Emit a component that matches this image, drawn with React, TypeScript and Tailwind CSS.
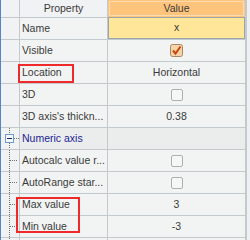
import React from "react";

type Row = {
  label: string;
  kind: "text" | "check" | "checked" | "empty" | "selected";
  value?: string;
  child?: boolean;
  group?: boolean;
};

const rows: Row[] = [
  { label: "Name", kind: "selected", value: "x" },
  { label: "Visible", kind: "checked" },
  { label: "Location", kind: "text", value: "Horizontal" },
  { label: "3D", kind: "check" },
  { label: "3D axis's thickn...", kind: "text", value: "0.38" },
  { label: "Numeric axis", kind: "empty", group: true },
  { label: "Autocalc value r...", kind: "check", child: true },
  { label: "AutoRange star...", kind: "check", child: true },
  { label: "Max value", kind: "text", value: "3", child: true },
  { label: "Min value", kind: "text", value: "-3", child: true },
  { label: "", kind: "empty", child: true },
];

const Box = () => (
  <span className="block w-[12px] h-[12px] rounded-[2px] border border-[#a9b1b5] bg-[#f5f7f7]" />
);

const Checked = () => (
  <svg width="13" height="13" viewBox="0 0 13 13">
    <rect x="0.5" y="0.5" width="12" height="12" rx="2" fill="#f6d3a8" stroke="#a88660" />
    <path d="M3 6.5 L5.5 9.5 L10.5 2.5" fill="none" stroke="#c8460e" strokeWidth="2" />
  </svg>
);

const Tree = ({ group }: { group?: boolean }) => (
  <svg width="18" height="21" viewBox="0 0 18 21" className="block">
    {group ? (
      <>
        <line x1="8.5" y1="0" x2="8.5" y2="6" stroke="#707070" strokeDasharray="1 1" />
        <rect x="4.5" y="6.5" width="8" height="8" fill="#f4f8fc" stroke="#6f9cc8" />
        <line x1="6" y1="10.5" x2="11" y2="10.5" stroke="#202060" />
        <line x1="13" y1="10.5" x2="18" y2="10.5" stroke="#707070" strokeDasharray="1 1" />
        <line x1="8.5" y1="15" x2="8.5" y2="21" stroke="#707070" strokeDasharray="1 1" />
      </>
    ) : (
      <>
        <line x1="8.5" y1="0" x2="8.5" y2="21" stroke="#707070" strokeDasharray="1 1" />
        <line x1="9" y1="10.5" x2="17" y2="10.5" stroke="#707070" strokeDasharray="1 1" />
      </>
    )}
  </svg>
);

export default function App() {
  return (
    <div
      className="relative w-[250px] h-[240px] overflow-hidden bg-[#eef1f3] flex text-[10.5px] text-[#3a3a3a]"
      style={{ fontFamily: '"Liberation Sans", Arial, sans-serif' }}
    >
      <div className="w-[1px] bg-[#5585c4] shrink-0" />
      <div className="flex flex-col">
        {/* header */}
        <div className="flex h-[18px] border-b border-[#c3cace] shrink-0">
          <div className="w-[19px] border-r border-[#c3cace] bg-[#f0f2f4]" />
          <div className="w-[88px] border-r border-[#c3cace] bg-[#f0f2f4] flex items-center justify-center">
            Property
          </div>
          <div className="w-[139px] border-r-2 border-[#c3cace] bg-[#ffc47c] p-[1px]">
            <div className="h-full border border-[#ffdcb0] flex items-center justify-center">Value</div>
          </div>
        </div>
        {rows.map((r, i) => (
          <div
            key={i}
            className={`flex h-[22px] shrink-0 border-b border-[#c3cace] ${r.group ? "bg-[#ebeded]" : "bg-[#f2f4f4]"}`}
          >
            <div className="w-[19px] border-r border-[#c3cace] bg-[#f0f2f4]">
              {(r.child || r.group) && <Tree group={r.group} />}
            </div>
            <div
              className={`w-[88px] border-r border-[#c3cace] flex items-center pl-[2px] whitespace-nowrap overflow-hidden ${r.group ? "text-[#1c1c96]" : ""}`}
            >
              {r.label}
            </div>
            <div className="w-[139px] border-r-2 border-[#c3cace] flex items-center justify-center">
              {r.kind === "selected" && (
                <div className="w-full h-[22px] -mt-[1px] border border-[#9aa4aa] bg-[#ffe699] flex items-center justify-center">
                  {r.value}
                </div>
              )}
              {r.kind === "text" && r.value}
              {r.kind === "check" && <Box />}
              {r.kind === "checked" && <Checked />}
            </div>
          </div>
        ))}
      </div>
      {/* highlight annotations */}
      <div className="absolute left-[18px] top-[64px] w-[56px] h-[19px] border-2 border-[#ee2a2a]" />
      <div className="absolute left-[16px] top-[197px] w-[64px] h-[36px] border-2 border-[#ee2a2a]" />
    </div>
  );
}
